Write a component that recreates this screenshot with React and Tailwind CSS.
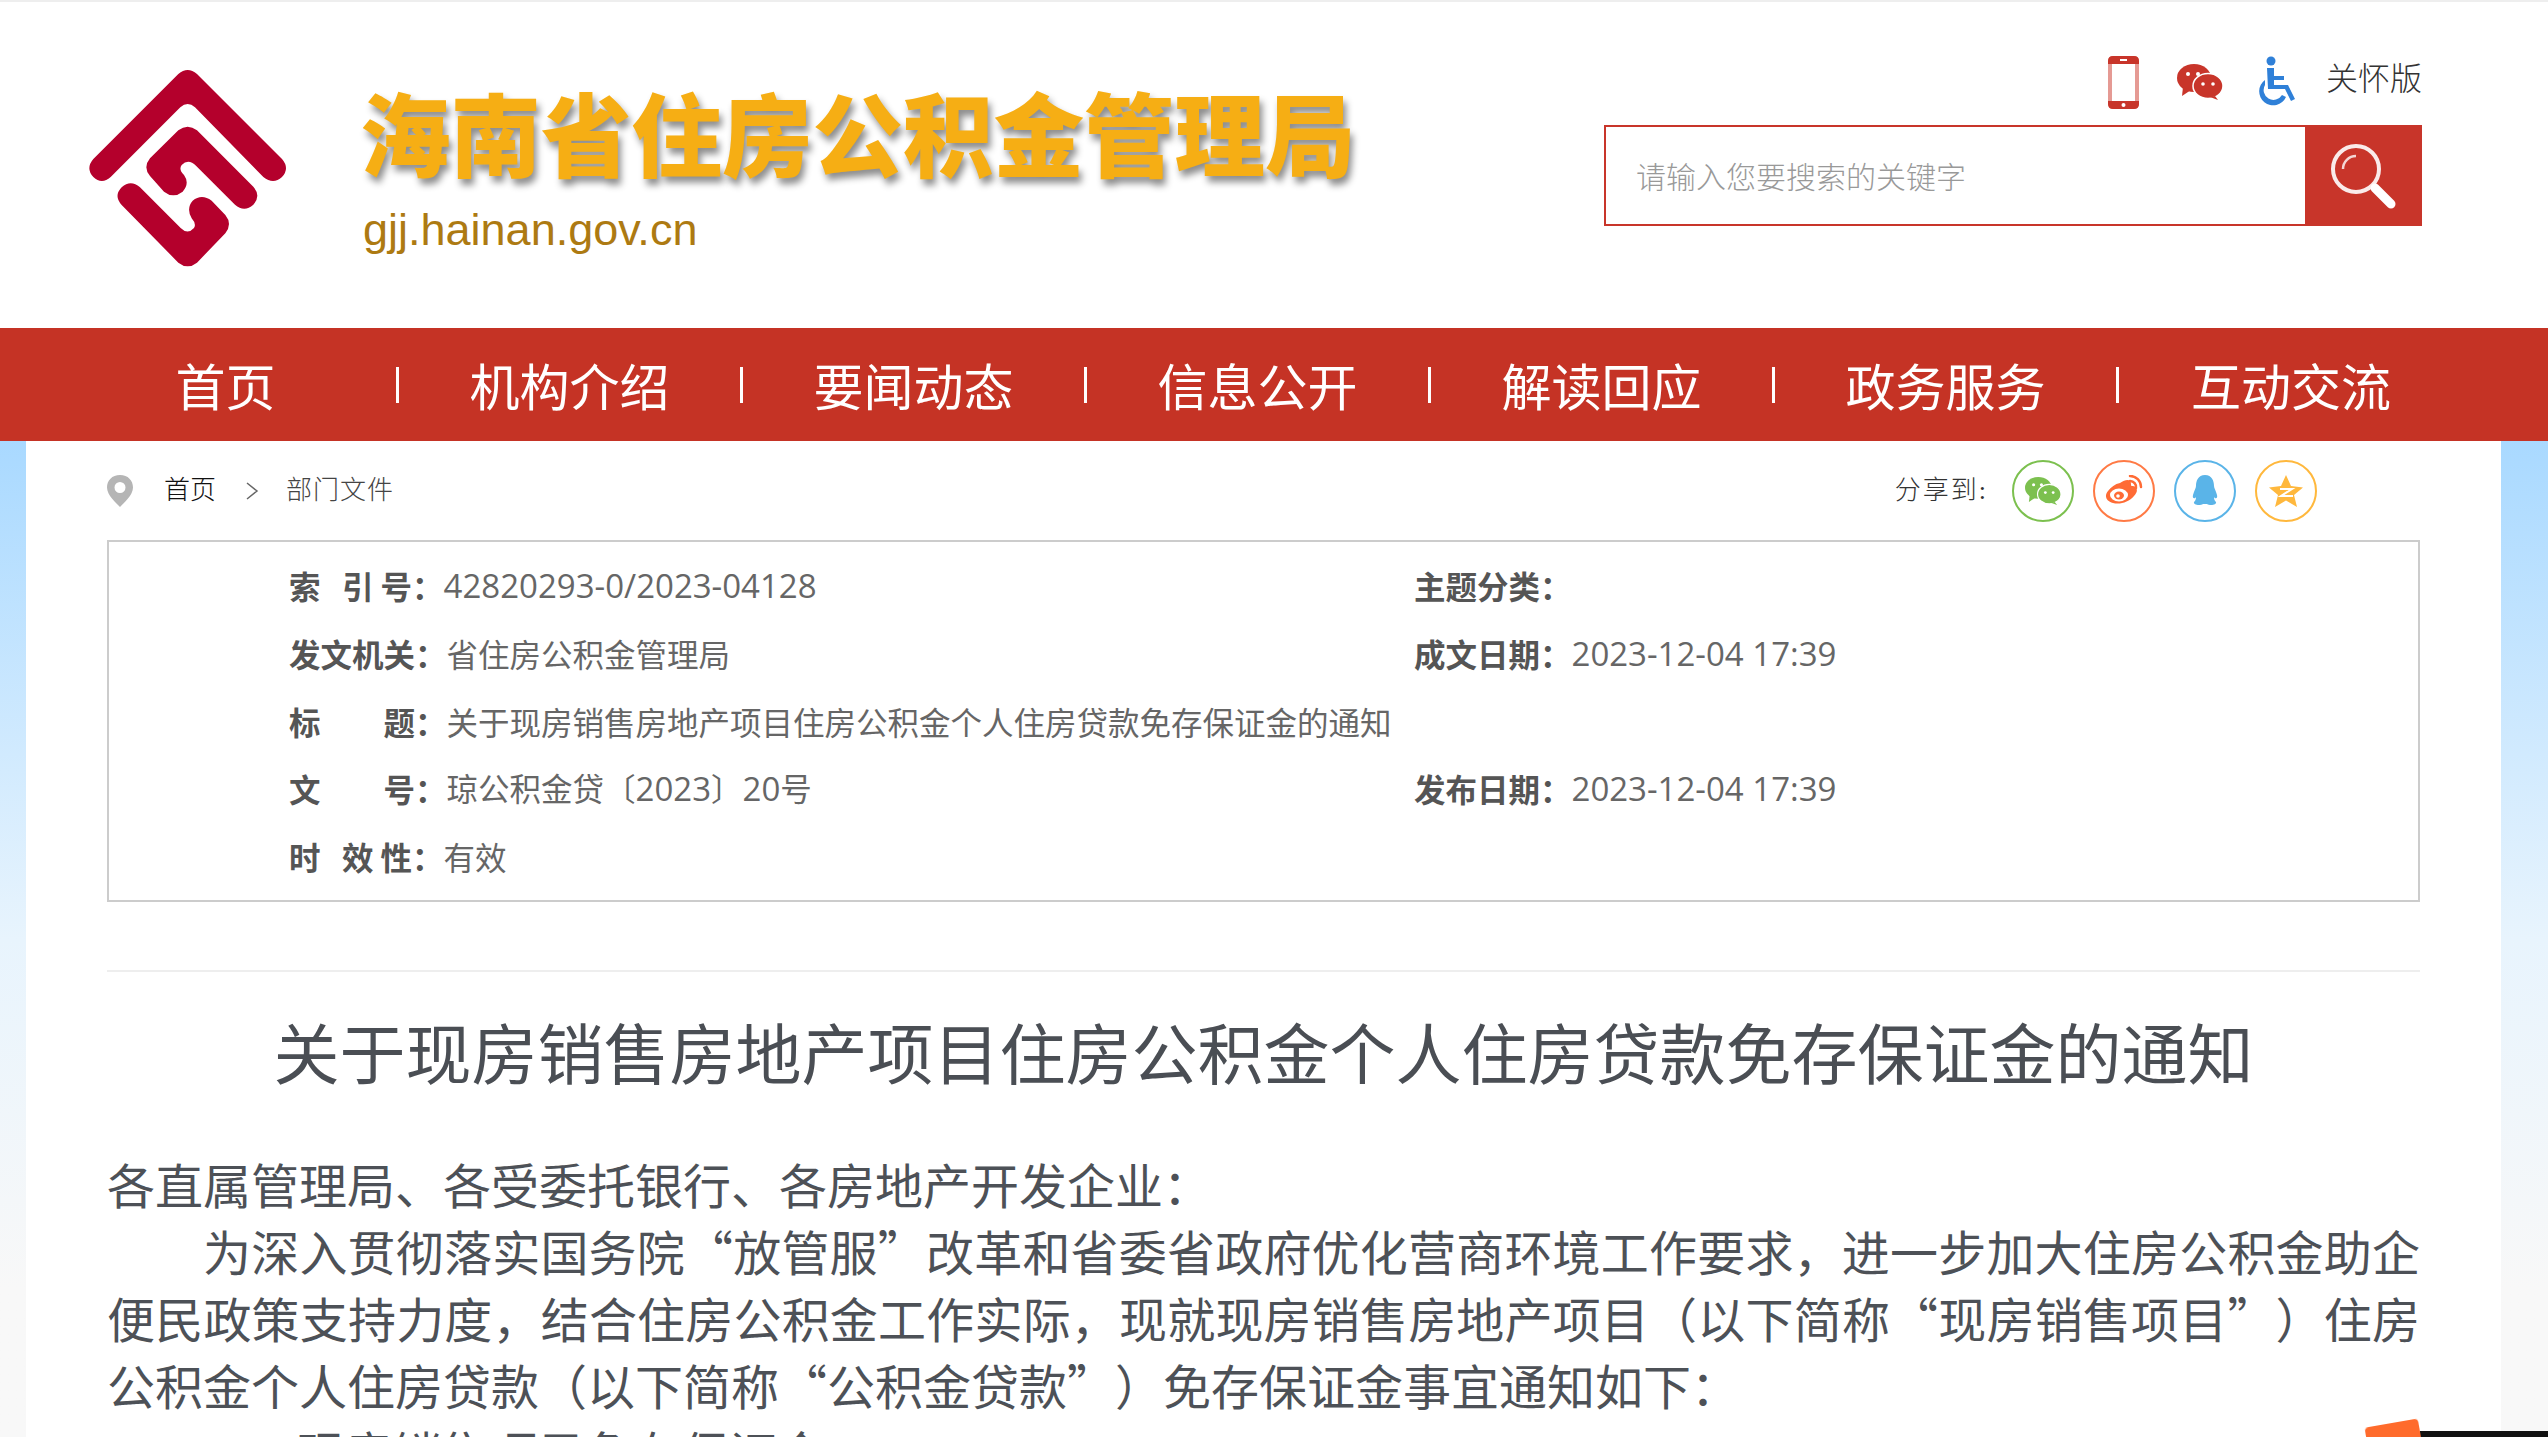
import React from "react";

const cjk = "font-['Noto_Sans_CJK_SC','Liberation_Sans',sans-serif]";

const navItems = ["首页", "机构介绍", "要闻动态", "信息公开", "解读回应", "政务服务", "互动交流"];

const Logo = () => (
  <svg width="240" height="240" viewBox="0 0 720 720" className="shrink-0">
    <g fill="#b4002c">
      <path d="M355 72 Q383 48 411 72 L666 327 Q690 355 666 381 Q640 405 610 381 L405 172 Q383 152 361 172 L152 381 Q125 405 100 381 Q76 355 100 327 Z" />
      <path d="M355 241 Q383 220 411 241 L580 410 Q604 438 580 464 Q553 488 525 464 L408 347 Q385 325 365 345 Q355 358 372 375 Q390 400 368 425 Q340 447 312 425 L270 378 Q248 352 270 325 Z" />
      <path d="M185 412 Q212 388 240 412 L362 534 Q383 555 402 534 Q410 522 395 505 Q378 475 398 452 Q425 430 455 452 L496 495 Q518 522 496 550 L411 638 Q383 660 355 638 L185 465 Q160 438 185 412Z" />
    </g>
  </svg>
);

const PhoneIcon = () => (
  <svg width="31" height="53" viewBox="0 0 31 53">
    <rect x="0" y="0" width="31" height="53" rx="5" fill="#e59a94" />
    <path d="M5 0 H26 Q31 0 31 5 V8 H0 V5 Q0 0 5 0Z" fill="#c8352a" />
    <path d="M0 45 H31 V48 Q31 53 26 53 H5 Q0 53 0 48Z" fill="#c8352a" />
    <rect x="4" y="8" width="23" height="37" fill="#fff" />
    <rect x="12" y="3" width="7" height="2" fill="#fff" />
    <circle cx="15.500" cy="49" r="2" fill="#fff" />
  </svg>
);

const Chat = ({ color, eye = "#fff", w = 46, h = 36 }) => (
  <svg width={w} height={h} viewBox="0 0 46 36">
    <ellipse cx="17" cy="14" rx="17" ry="14" fill={color} />
    <path d="M6 23 L5 32 L14 26Z" fill={color} />
    <ellipse cx="31" cy="22" rx="15" ry="12.500" fill={color} stroke="#fff" strokeWidth="1.500" />
    <path d="M38 32 L41 36 L33 33Z" fill={color} />
    <circle cx="11" cy="10" r="2" fill={eye} />
    <circle cx="21" cy="10" r="2" fill={eye} />
    <circle cx="26" cy="20" r="1.800" fill={eye} />
    <circle cx="36" cy="20" r="1.800" fill={eye} />
  </svg>
);

const Wheelchair = () => (
  <svg width="42" height="52" viewBox="0 0 42 52" fill="#2f80d8">
    <circle cx="14" cy="5" r="4.500" />
    <path d="M10 12 L17 12 L17 20 L27 20 L27 24 L17 24 L17 29 L31 29 L38 43 L34 45 L28 33 L11 33Z" />
    <path d="M8 24 L8 29 A9.500 9.500 0 1 0 25 39 L29 41 A14 14 0 1 1 8 24Z" />
  </svg>
);

const SearchIcon = () => (
  <svg width="68" height="68" viewBox="0 0 68 68" fill="none">
    <circle cx="27" cy="27" r="23" stroke="#fff" strokeWidth="4" opacity=".9" />
    <path d="M14 27 A13 13 0 0 1 27 14" stroke="#fff" strokeWidth="2.500" opacity=".8" />
    <path d="M46 46 L62 62" stroke="#fff" strokeWidth="9" strokeLinecap="round" />
  </svg>
);

const PinIcon = () => (
  <svg width="26" height="32" viewBox="0 0 26 32">
    <path fillRule="evenodd" fill="#b5b5b5" d="M13 0 C21 0 26 5.500 26 12.500 C26 20 17 28 13 32 C9 28 0 20 0 12.500 C0 5.500 5 0 13 0Z M13 7 A5.500 5.500 0 1 0 13 18 A5.500 5.500 0 1 0 13 7Z" />
  </svg>
);

const WeiboIcon = () => (
  <svg width="38" height="32" viewBox="0 0 38 32" fill="none">
    <path fill="#ff6b35" d="M15 8 C21 4 26 4 26 9 C26 11 26 11 28 11 C33 12 33 17 29 21 C24 27 15 30 8 28 C1 26 -1 21 3 16 C6 12 10 9 15 8Z" />
    <ellipse cx="14" cy="20" rx="9" ry="6.500" fill="#fff" />
    <ellipse cx="14" cy="20.500" rx="5" ry="4" fill="#ff6b35" />
    <circle cx="13" cy="21" r="1.800" fill="#fff" />
    <path d="M25 6 A6 6 0 0 1 31 13" stroke="#ff6b35" strokeWidth="2.500" strokeLinecap="round" />
    <path d="M25 1 A11 11 0 0 1 36 12" stroke="#ff6b35" strokeWidth="2.500" strokeLinecap="round" />
  </svg>
);

const QQIcon = () => (
  <svg width="30" height="32" viewBox="0 0 30 32" fill="#5ab4e8">
    <path d="M15 0 C22 0 24 6 24 11 C24 13 26 16 27 20 C28 24 25 24 24 22 C24 25 25 26 26 27 C27 30 20 31 17 29 L13 29 C10 31 3 30 4 27 C5 26 6 25 6 22 C5 24 2 24 3 20 C4 16 6 13 6 11 C6 6 8 0 15 0Z" />
  </svg>
);

const QzoneIcon = () => (
  <svg width="34" height="32" viewBox="0 0 34 32">
    <path fill="#ffb83d" d="M17 0 L22 11 L34 12.500 L25 20 L28 32 L17 25.500 L6 32 L9 20 L0 12.500 L12 11Z" />
    <path d="M11 14 L23 14 L12 21 L24 21" stroke="#fff" strokeWidth="2" fill="none" />
  </svg>
);

const ShareCircle = ({ border, children }) => (
  <div className={`flex h-[62px] w-[62px] items-center justify-center rounded-full border-2 ${border}`}>
    {children}
  </div>
);

const Num = ({ children }) => (
  <span className="font-['Open_Sans',sans-serif] text-[33px] font-normal">{children}</span>
);

const Meta = ({ label, children, wide }) => (
  <div className={`flex items-center ${wide ? "w-[1125px]" : ""}`}>
    <span className="font-bold text-[#555]">{label}</span>
    <span className="text-[#666]">{children}</span>
  </div>
);

export default function App() {
  return (
    <div className={`flex h-screen flex-col overflow-hidden bg-white [text-spacing-trim:space-all] ${cjk}`}>
      <div className="h-[2px] shrink-0 bg-[#eee]" />
      <header className="flex h-[326px] shrink-0 justify-between">
        <div className="flex pl-[60px] pt-[48px]">
          <Logo />
          <div className="ml-[60px] flex flex-col pt-[26px]">
            <div className="text-[90.500px] leading-[110px] font-black text-[#f6ae14] [text-shadow:3px_6px_7px_rgba(0,0,0,0.45)]">
              海南省住房公积金管理局
            </div>
            <div className="ml-[3px] mt-[19px] font-['Liberation_Sans',sans-serif] text-[45px] leading-[50px] text-[#ad7a12]">
              gjj.hainan.gov.cn
            </div>
          </div>
        </div>
        <div className="mr-[126px] flex w-[818px] flex-col items-end pt-[51px]">
          <div className="flex h-[58px] items-center">
            <PhoneIcon />
            <div className="ml-[38px]"><Chat color="#c8352a" /></div>
            <div className="ml-[34px]"><Wheelchair /></div>
            <span className="ml-[27px] mb-[12px] text-[32px] leading-none font-light text-[#333]">关怀版</span>
          </div>
          <div className="mt-[14px] flex h-[101px] w-[818px] border-2 border-[#c8352a]">
            <div className="flex flex-1 items-center pl-[30px] text-[30px] font-light text-[#999]">
              请输入您要搜索的关键字
            </div>
            <div className="flex w-[115px] items-center justify-center bg-[#c8352a]">
              <SearchIcon />
            </div>
          </div>
        </div>
      </header>

      <nav className="flex h-[113px] shrink-0 items-center bg-[#c53325] pl-[55px]">
        {navItems.map((item, i) => (
          <div key={item} className="flex w-[344px] items-center">
            <div className="flex-1 pb-[2px] text-center text-[50px] leading-none text-white">{item}</div>
            {i < navItems.length - 1 && <div className="h-[36px] w-[3px] bg-white" />}
          </div>
        ))}
      </nav>

      <div className="flex min-h-0 flex-1 bg-gradient-to-b from-[#a9d9ff] from-0% via-[#e8f4fd] via-50% to-[#f8f8f8] to-85%">
        <main className="ml-[26px] mr-[47px] flex-1 overflow-hidden bg-white px-[81px]">
          <div className="flex h-[99px] items-center justify-between">
            <div className="flex items-center font-['Liberation_Serif','Noto_Sans_CJK_SC',serif] text-[26px] font-light">
              <PinIcon />
              <span className="ml-[31px] text-[#111]">首页</span>
              <svg width="14" height="20" viewBox="0 0 14 20" fill="none" className="ml-[29px]">
                <path d="M2 2 L12 10 L2 18" stroke="#666" strokeWidth="1.500" />
              </svg>
              <span className="ml-[27px] tracking-[1px] text-[#444]">部门文件</span>
            </div>
            <div className="mr-[103px] flex items-center">
              <span className="mr-[24px] font-['Liberation_Serif','Noto_Sans_CJK_SC',serif] text-[26px] font-light tracking-[2px] text-[#333]">分享到:</span>
              <div className="flex gap-[19px]">
                <ShareCircle border="border-[#7cc04f]"><Chat color="#7cc04f" w={36} h={30} /></ShareCircle>
                <ShareCircle border="border-[#ff7a45]"><WeiboIcon /></ShareCircle>
                <ShareCircle border="border-[#5ab4e8]"><QQIcon /></ShareCircle>
                <ShareCircle border="border-[#ffb83d]"><QzoneIcon /></ShareCircle>
              </div>
            </div>
          </div>

          <section className="flex h-[362px] flex-col justify-center border-2 border-[#ccc] pb-[2px] pl-[180px] text-[31.500px] leading-[66.500px]">
            <div className="flex">
              <Meta wide label={"索\u00a0\u00a0\u00a0引\u00a0号："}><Num>42820293-0/2023-04128</Num></Meta>
              <Meta label="主题分类：" />
            </div>
            <div className="flex">
              <Meta wide label="发文机关：">省住房公积金管理局</Meta>
              <Meta label="成文日期："><Num>2023-12-04 17:39</Num></Meta>
            </div>
            <Meta label={"标\u3000\u3000题："}>关于现房销售房地产项目住房公积金个人住房贷款免存保证金的通知</Meta>
            <div className="flex">
              <Meta wide label={"文\u3000\u3000号："}>琼公积金贷〔<Num>2023</Num>〕<Num>20</Num>号</Meta>
              <Meta label="发布日期："><Num>2023-12-04 17:39</Num></Meta>
            </div>
            <Meta label={"时\u00a0\u00a0\u00a0效\u00a0性："}>有效</Meta>
          </section>

          <div className="mt-[68px] border-t-2 border-[#eee]" />
          <h1 className="mt-[30px] text-center text-[66px] leading-[96px] text-[#4a4e54]">
            关于现房销售房地产项目住房公积金个人住房贷款免存保证金的通知
          </h1>
          <article className="mt-[52px] text-[48px] leading-[67px] text-[#4d5157]">
            <p>各直属管理局、各受委托银行、各房地产开发企业：</p>
            <p className="indent-[96px] text-justify">
              为深入贯彻落实国务院“放管服”改革和省委省政府优化营商环境工作要求，进一步加大住房公积金助企便民政策支持力度，结合住房公积金工作实际，现就现房销售房地产项目（以下简称“现房销售项目”）住房公积金个人住房贷款（以下简称“公积金贷款”）免存保证金事宜通知如下：
            </p>
            <p className="indent-[190px]">现房销售项目免存保证金</p>
          </article>
        </main>
      </div>

      <div className="fixed bottom-0 right-0 h-[6px] w-[128px] bg-[#111]" />
      <div className="fixed bottom-[-8px] right-[128px] h-[22px] w-[54px] rotate-[-10deg] rounded-[4px] bg-[#ff6b2c]" />
    </div>
  );
}
